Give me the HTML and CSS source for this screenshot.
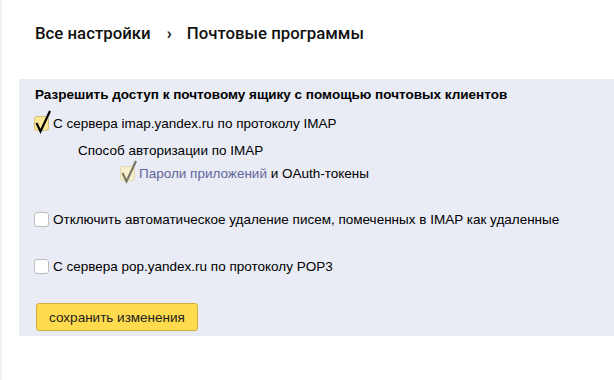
FILE: index.html
```html
<!DOCTYPE html>
<html lang="ru">

<head>
    <meta charset="UTF-8">
    <title>Почтовые программы</title>
    <link rel="stylesheet" href="styles.css">
</head>

<body>
    <div class="page">
        <div class="crumbs">
            <span>Все настройки</span>
            <span class="sep">›</span>
            <span>Почтовые программы</span>
        </div>

        <form class="panel">
            <div class="title">Разрешить доступ к почтовому ящику с помощью почтовых клиентов</div>

            <label class="opt first">
                <span class="box checked">
                    <svg viewBox="0 0 20 24" width="20" height="24"><path d="M2.5 13 L6.5 21.5 L16 1" /></svg>
                </span>
                С сервера imap.yandex.ru по протоколу IMAP
            </label>

            <div class="sub">
                <div class="sub-title">Способ авторизации по IMAP</div>
                <label class="opt disabled">
                    <span class="box checked">
                        <svg viewBox="0 0 20 24" width="20" height="24"><path d="M2.5 13 L6.5 21.5 L16 1" /></svg>
                    </span>
                    <a href="#">Пароли приложений</a>&nbsp;и OAuth-токены
                </label>
            </div>

            <label class="opt spaced">
                <span class="box"></span>
                Отключить автоматическое удаление писем, помеченных в IMAP как удаленные
            </label>

            <label class="opt spaced">
                <span class="box"></span>
                С сервера pop.yandex.ru по протоколу POP3
            </label>

            <button type="button" class="save">сохранить изменения</button>
        </form>
    </div>
</body>

</html>
```

FILE: styles.css
```css
* {
    padding: 0;
    margin: 0;
    box-sizing: border-box;
}

body {
    background: #fff;
    font-family: "Liberation Sans", Arial, sans-serif;
    font-size: 13.5px;
    color: #000;
}

.page {
    height: 380px;
    border-left: 2px solid #f3f3f3;
}

/* хлебные крошки */
.crumbs {
    height: 79px;
    padding: 22px 0 0 33px;
    display: flex;
    align-items: flex-start;
    font-family: Roboto, "Noto Sans", sans-serif;
    font-weight: 500;
    font-size: 16.8px;
    line-height: 22px;
    color: #111;
}

.crumbs .sep {
    margin: 0 15px 0 16px;
    font-weight: 700;
}

/* серая панель */
.panel {
    margin-left: 17px;
    background: #e9ecf5;
    padding: 8px 0 5px 12px;
}

.title {
    font-weight: bold;
    line-height: 16px;
    padding-left: 4px;
}

.opt {
    display: flex;
    align-items: center;
    height: 20px;
    padding-left: 3px;
    cursor: pointer;
}

.opt.first {
    margin-top: 10px;
}

.opt.spaced {
    margin-top: 26px;
}

.opt.spaced + .opt.spaced {
    margin-top: 27px;
}

.box {
    position: relative;
    width: 15px;
    height: 15px;
    margin-right: 4px;
    flex: none;
    background: #fff;
    border: 1px solid #bdbdbd;
    border-radius: 3px;
}

.box.checked {
    background: #fbe796;
    border-color: #d3c27a;
}

.box svg {
    position: absolute;
    left: -1px;
    top: -7px;
    overflow: visible;
}

.box svg path {
    fill: none;
    stroke: #000;
    stroke-width: 2.2;
    stroke-linejoin: miter;
}

.sub {
    padding-left: 47px;
}

.sub-title {
    margin-top: 8px;
    line-height: 20px;
}

.sub .opt {
    margin-top: 2px;
    padding-left: 42px;
}

.opt.disabled .box {
    background: #f6efcc;
    border-color: #e3dab0;
}

.opt.disabled .box svg path {
    stroke: #7a7765;
}

.opt a {
    color: #5f6699;
    text-decoration: none;
}

.save {
    display: block;
    margin: 27px 0 0 5px;
    width: 162px;
    height: 28px;
    background: #ffdb4d;
    border: 1px solid #cfae3f;
    border-radius: 3px;
    font-family: "Liberation Sans", Arial, sans-serif;
    font-size: 13.5px;
    color: #222;
    cursor: pointer;
}
```
